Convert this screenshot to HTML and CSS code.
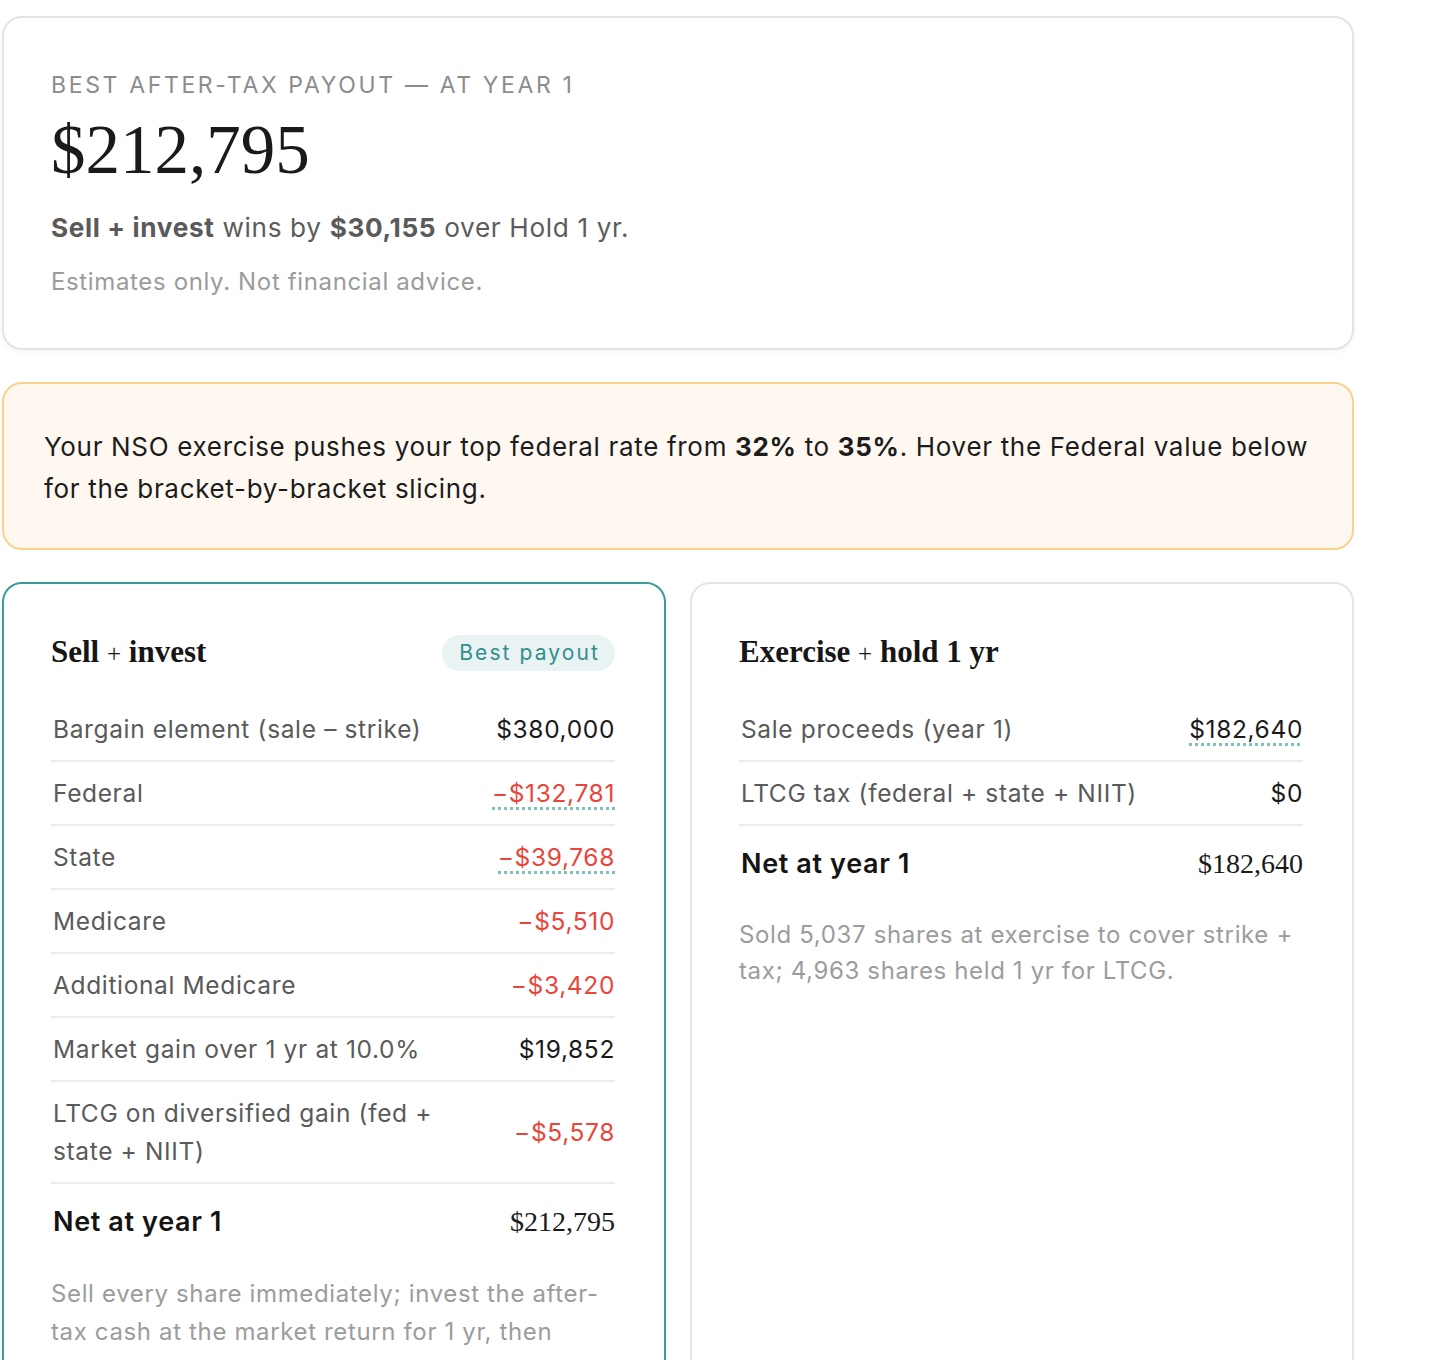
FILE: index.html
```html
<!DOCTYPE html>
<html lang="en">
<head>
<meta charset="utf-8">
<title>NSO payout</title>
<link rel="stylesheet" href="styles.css">
</head>
<body>
<main class="page">
  <section class="hero">
    <div class="overline">Best after-tax payout — at year 1</div>
    <div class="big">$212,795</div>
    <p class="summary"><b>Sell + invest</b> wins by <b>$30,155</b> over Hold 1 yr.</p>
    <p class="disclaimer">Estimates only. Not financial advice.</p>
  </section>

  <section class="notice">
    <p>Your NSO exercise pushes your top federal rate from <b>32%</b> to <b>35%</b>. Hover the Federal value below for the bracket-by-bracket slicing.</p>
  </section>

  <section class="compare">
    <article class="card best">
      <header class="card-head">
        <h2 class="card-title">Sell <span class="plus">+</span> invest</h2>
        <span class="badge">Best payout</span>
      </header>
      <div class="rows">
        <div class="row"><span class="label">Bargain element (sale – strike)</span><span class="val">$380,000</span></div>
        <div class="row"><span class="label">Federal</span><span class="val neg dotted">−$132,781</span></div>
        <div class="row"><span class="label">State</span><span class="val neg dotted">−$39,768</span></div>
        <div class="row"><span class="label">Medicare</span><span class="val neg">−$5,510</span></div>
        <div class="row"><span class="label">Additional Medicare</span><span class="val neg">−$3,420</span></div>
        <div class="row"><span class="label">Market gain over 1 yr at 10.0%</span><span class="val">$19,852</span></div>
        <div class="row"><span class="label narrow">LTCG on diversified gain (fed + state + NIIT)</span><span class="val neg">−$5,578</span></div>
        <div class="row net"><span class="label">Net at year 1</span><span class="val serif">$212,795</span></div>
      </div>
      <p class="card-note">Sell every share immediately; invest the after-tax cash at the market return for 1 yr, then liquidate. Diversified gain is also taxed as LTCG.</p>
    </article>

    <article class="card">
      <header class="card-head">
        <h2 class="card-title">Exercise <span class="plus">+</span> hold 1 yr</h2>
      </header>
      <div class="rows">
        <div class="row"><span class="label">Sale proceeds (year 1)</span><span class="val dotted">$182,640</span></div>
        <div class="row"><span class="label">LTCG tax (federal + state + NIIT)</span><span class="val">$0</span></div>
        <div class="row net"><span class="label">Net at year 1</span><span class="val serif">$182,640</span></div>
      </div>
      <p class="card-note">Sold 5,037 shares at exercise to cover strike + tax; 4,963 shares held 1 yr for LTCG.</p>
    </article>
  </section>
</main>
</body>
</html>
```

FILE: styles.css
```css
* { box-sizing: border-box; }

html, body {
  margin: 0;
  background: #ffffff;
}

body {
  font-family: Inter, "Noto Sans", "Liberation Sans", sans-serif;
  letter-spacing: 0.04em;
  color: #1a1a1a;
  padding: 16px 0 0 2px;
}

.page {
  width: 1352px;
  display: flex;
  flex-direction: column;
  gap: 32px;
}

/* Hero card */
.hero {
  border: 2px solid #e4e4e4;
  border-radius: 20px;
  box-shadow: 0 2px 6px rgba(0, 0, 0, 0.04);
  padding: 52px 47px 48px;
}

.overline {
  font-size: 23px;
  line-height: 30px;
  letter-spacing: 0.115em;
  text-transform: uppercase;
  color: #8c8c8c;
}

.big {
  font-family: "Liberation Serif", "DejaVu Serif", serif;
  letter-spacing: 0;
  font-size: 69px;
  line-height: 80px;
  color: #1a1a1a;
  margin-top: 10px;
}

.summary {
  margin: 20px 0 0;
  font-size: 26.2px;
  line-height: 36px;
  color: #5c5c5c;
}

.summary b { font-weight: 700; color: #5a5a5a; }

.disclaimer {
  margin: 18px 0 0;
  font-size: 24px;
  line-height: 36px;
  color: #9b9b9b;
}

/* Notice */
.notice {
  background: #fff8f1;
  border: 2px solid #fbd18d;
  border-radius: 20px;
  padding: 42px 32px 38px 40px;
}

.notice p {
  margin: 0;
  font-size: 26px;
  letter-spacing: 0.026em;
  line-height: 42px;
  color: #1c1c1c;
}

.notice b { font-weight: 700; }

/* Comparison cards */
.compare {
  display: grid;
  grid-template-columns: 1fr 1fr;
  gap: 24px;
  align-items: stretch;
}

.card {
  border: 2px solid #e4e4e4;
  border-radius: 20px;
  padding: 48px 49px 48px 47px;
  min-height: 820px;
}

.card.best {
  border-color: #3c9c99;
}

.card-head {
  display: flex;
  align-items: center;
  justify-content: space-between;
  height: 42px;
}

.card-title {
  margin: 0;
  font-family: "Liberation Serif", "DejaVu Serif", serif;
  letter-spacing: 0;
  font-weight: 700;
  font-size: 31px;
  line-height: 42px;
  color: #161616;
}

.plus {
  font-weight: 400;
  font-size: 25px;
}

.badge {
  background: #e9f3f3;
  color: #2f8f8c;
  font-size: 21px;
  letter-spacing: 0.1em;
  line-height: 36px;
  padding: 0 15px 0 17px;
  border-radius: 18px;
}

.rows {
  margin-top: 24px;
}

.row {
  display: flex;
  justify-content: space-between;
  align-items: center;
  gap: 24px;
  padding: 12px 0;
  border-bottom: 2px solid #ececec;
  font-size: 24.5px;
  line-height: 38px;
}

.label {
  color: #5a5a5a;
  padding-left: 2px;
}

.label.narrow {
  max-width: 400px;
}

.val {
  color: #1a1a1a;
  white-space: nowrap;
}

.val.neg { color: #e8453b; }

.val.dotted {
  background-image: repeating-linear-gradient(to right, #80bfbc 0 3px, transparent 3px 6px);
  background-repeat: no-repeat;
  background-size: 100% 3px;
  background-position: left 0 bottom 2px;
}

.row.net {
  border-bottom: none;
  padding: 19px 0 20px;
}

.row.net .label {
  font-size: 27px;
  font-weight: 600;
  color: #141414;
}

.val.serif {
  font-family: "Liberation Serif", "DejaVu Serif", serif;
  letter-spacing: 0;
  font-size: 28px;
  color: #1a1a1a;
}

.card-note {
  margin: 14px 0 0;
  font-size: 24px;
  line-height: 38px;
  color: #9c9c9c;
}

.card:not(.best) .card-note {
  line-height: 36px;
}
```
